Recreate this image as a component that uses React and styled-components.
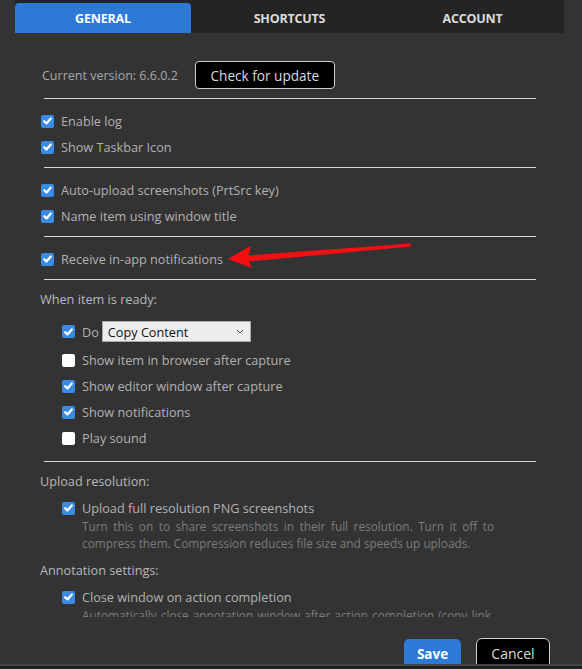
import React from "react";
import styled, { createGlobalStyle } from "styled-components";

const GlobalStyle = createGlobalStyle`
  html, body {
    margin: 0;
    padding: 0;
    background: #333333;
  }
  * {
    box-sizing: border-box;
  }
`;

const FONT = `"Open Sans", "Noto Sans", sans-serif`;

const Page = styled.div`
  position: relative;
  width: 582px;
  height: 669px;
  background: #333333;
  font-family: ${FONT};
  display: flex;
  flex-direction: column;
  overflow: hidden;
`;

const TabBar = styled.div`
  margin-left: 15px;
  width: 549px;
  height: 33px;
  flex: none;
  background: #242424;
  display: grid;
  grid-template-columns: repeat(3, 1fr);
  padding-top: 3px;
`;

const Tab = styled.div`
  display: flex;
  align-items: center;
  justify-content: center;
  margin-right: ${(p) => (p.$active ? "7px" : "0")};
  background: ${(p) => (p.$active ? "#2d79d6" : "transparent")};
  border-radius: 4px 4px 0 0;
  color: ${(p) => (p.$active ? "#ffffff" : "#dcdcdc")};
  font-size: 12.5px;
  font-weight: 700;
  letter-spacing: -0.2px;
`;

const Content = styled.div`
  flex: 1;
  overflow: hidden;
  padding: 28px 0 0 40px;
`;

const VersionRow = styled.div`
  display: flex;
  align-items: center;
  height: 28px;
  padding-left: 2px;
  gap: 17px;
`;

const VersionText = styled.span`
  color: #a8a8a8;
  font-size: 12.5px;
`;

const OutlineButton = styled.button`
  height: 28px;
  width: ${(p) => p.$width || "auto"};
  padding: 0;
  background: #000000;
  border: 1px solid #cfcfcf;
  border-radius: 4px;
  color: #dadada;
  font-family: ${FONT};
  font-size: 13.6px;
`;

const Rule = styled.hr`
  border: none;
  height: 1px;
  background: #d8d8d8;
  width: 492px;
  margin: ${(p) => p.$margin || "7px 0 9px 4px"};
`;

const Row = styled.div`
  display: flex;
  align-items: center;
  height: ${(p) => p.$height || "26px"};
  padding-left: ${(p) => (p.$nested ? "22px" : "1px")};
  gap: 7px;
  color: #b2b2b2;
  font-size: 12.7px;
`;

const Box = styled.span`
  width: 13px;
  height: 13px;
  flex: none;
  border-radius: 2px;
  background: ${(p) => (p.$checked ? "#3a8be6" : "#ffffff")};
  display: flex;
  align-items: center;
  justify-content: center;
`;

const Heading = styled.div`
  height: 20px;
  display: flex;
  align-items: center;
  color: #b8b8b8;
  font-size: 12.7px;
  margin-top: ${(p) => p.$top || "0"};
  margin-bottom: 7px;
`;

const List = styled.div`
  display: flex;
  flex-direction: column;
`;

const SelectBox = styled.div`
  width: 149px;
  height: 21px;
  margin-left: -4px;
  background: #ededed;
  border: 1px solid #a9a9a9;
  display: flex;
  align-items: center;
  justify-content: space-between;
  padding: 0 6px 0 5px;
  color: #111111;
  font-size: 12.7px;
`;

const Description = styled.p`
  margin: 0 0 0 42px;
  width: 412px;
  color: #7c7c7c;
  font-size: 11.8px;
  line-height: 17px;
  text-align: justify;
`;

const Footer = styled.div`
  height: 47px;
  flex: none;
  overflow: hidden;
  display: flex;
  justify-content: flex-end;
  align-items: flex-start;
  gap: 15px;
  padding: 22px 32px 0 0;
`;

const SaveButton = styled.button`
  width: 57px;
  height: 30px;
  background: #2d79d6;
  border: none;
  border-radius: 5px;
  color: #ffffff;
  font-family: ${FONT};
  font-weight: 700;
  font-size: 13.5px;
`;

const CancelButton = styled(OutlineButton)`
  height: 31px;
  margin-top: -1px;
  border-radius: 6px;
  font-size: 14px;
`;

const Taskbar = styled.div`
  height: 5px;
  flex: none;
  background: #1f1f1f;
  border-top: 2px solid #474747;
`;

const ArrowLayer = styled.svg`
  position: absolute;
  left: 0;
  top: 0;
  pointer-events: none;
`;

const Check = () => (
  <svg width="9" height="8" viewBox="0 0 9 8">
    <path
      d="M1.2 4.2 L3.5 6.4 L7.8 1.5"
      fill="none"
      stroke="#fff"
      strokeWidth="2.2"
      strokeLinecap="round"
      strokeLinejoin="round"
    />
  </svg>
);

const Checkbox = ({ checked }) => (
  <Box $checked={checked}>{checked && <Check />}</Box>
);

const Option = ({ checked, nested, height, children }) => (
  <Row $nested={nested} $height={height}>
    <Checkbox checked={checked} />
    <span>{children}</span>
  </Row>
);

const Chevron = () => (
  <svg width="8" height="5" viewBox="0 0 8 5">
    <path d="M1 1 L4 4 L7 1" fill="none" stroke="#444" strokeWidth="1" />
  </svg>
);

export default function App() {
  return (
    <>
      <GlobalStyle />
      <Page>
        <TabBar>
          <Tab $active>GENERAL</Tab>
          <Tab>SHORTCUTS</Tab>
          <Tab>ACCOUNT</Tab>
        </TabBar>

        <Content>
          <VersionRow>
            <VersionText>Current version: 6.6.0.2</VersionText>
            <OutlineButton $width="140px">Check for update</OutlineButton>
          </VersionRow>
          <Rule $margin="9px 0 9px 4px" />

          <Option checked>Enable log</Option>
          <Option checked>Show Taskbar Icon</Option>
          <Rule />

          <Option checked>Auto-upload screenshots (PrtSrc key)</Option>
          <Option checked>Name item using window title</Option>
          <Rule />

          <Option checked>Receive in-app notifications</Option>
          <Rule />

          <Heading>When item is ready:</Heading>
          <List>
            <Row $nested $height="31px">
              <Checkbox checked />
              <span>Do</span>
              <SelectBox>
                <span>Copy Content</span>
                <Chevron />
              </SelectBox>
            </Row>
            <Option nested>Show item in browser after capture</Option>
            <Option nested checked>Show editor window after capture</Option>
            <Option nested checked>Show notifications</Option>
            <Option nested>Play sound</Option>
          </List>
          <Rule $margin="10px 0 9px 4px" />

          <Heading>Upload resolution:</Heading>
          <Option nested checked height="20px">
            Upload full resolution PNG screenshots
          </Option>
          <Description>
            Turn this on to share screenshots in their full resolution. Turn it
            off to compress them. Compression reduces file size and speeds up
            uploads.
          </Description>

          <Heading $top="8px">Annotation settings:</Heading>
          <Option nested checked height="20px">
            Close window on action completion
          </Option>
          <Description>
            Automatically close annotation window after action completion (copy
            link, upload, save to disk).
          </Description>
        </Content>

        <Footer>
          <SaveButton>Save</SaveButton>
          <CancelButton $width="74px">Cancel</CancelButton>
        </Footer>
        <Taskbar />

        <ArrowLayer width="582" height="669" viewBox="0 0 582 669">
          <polygon
            points="228,259 251,245.5 248.5,255.5 411,243.5 411,246.5 249,261.5 252,268"
            fill="#f31010"
          />
        </ArrowLayer>
      </Page>
    </>
  );
}
